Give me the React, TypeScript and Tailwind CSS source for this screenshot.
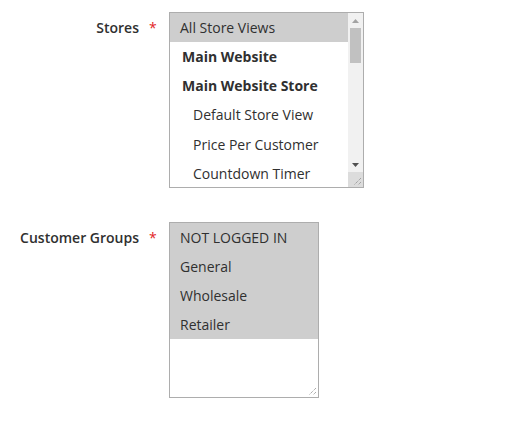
import React from "react";

type Opt = { label: string; bold?: boolean; indent?: number; selected?: boolean; tall?: boolean };

const storeOptions: Opt[] = [
  { label: "All Store Views", selected: true, indent: 10 },
  { label: "Main Website", bold: true, indent: 12 },
  { label: "Main Website Store", bold: true, indent: 12 },
  { label: "Default Store View", indent: 23, tall: true },
  { label: "Price Per Customer", indent: 23 },
  { label: "Countdown Timer", indent: 23 },
];

const groupOptions: Opt[] = [
  { label: "NOT LOGGED IN", selected: true, indent: 10 },
  { label: "General", selected: true, indent: 10 },
  { label: "Wholesale", selected: true, indent: 10 },
  { label: "Retailer", selected: true, indent: 10 },
];

function Resizer() {
  return (
    <svg width="15" height="15" viewBox="0 0 15 15" className="block">
      <path d="M13 6 L6 13" stroke="#8a8a8a" strokeWidth="1" strokeDasharray="1 1" />
      <path d="M13 10 L10 13" stroke="#8a8a8a" strokeWidth="1" strokeDasharray="1 1" />
    </svg>
  );
}

function OptionRow({ opt }: { opt: Opt }) {
  return (
    <div
      className={`shrink-0 whitespace-nowrap ${opt.tall ? "h-[30px] leading-[29px]" : "h-[29px] leading-[29px]"} ${
        opt.selected ? "bg-[#cecece]" : ""
      } ${opt.bold ? "font-bold" : ""}`}
      style={{ paddingLeft: opt.indent }}
    >
      {opt.label}
    </div>
  );
}

function FieldLabel({ text }: { text: string }) {
  return (
    <div className="flex w-[169px] shrink-0 items-start pt-[1px] leading-[29px]">
      <span className="w-[139px] text-right font-semibold">{text}</span>
      <span className="ml-[10px] text-[#e22626]">*</span>
    </div>
  );
}

export default function App() {
  return (
    <div
      className="h-[426px] w-[524px] bg-white pt-[12px] text-[14px] text-[#303030]"
      style={{ fontFamily: '"Open Sans", "Noto Sans", sans-serif' }}
    >
      <div className="flex">
        <FieldLabel text="Stores" />
        <div className="flex h-[176px] w-[195px] border border-[#adadad] bg-white">
          <div className="flex flex-1 flex-col overflow-hidden">
            {storeOptions.map(o => (
              <OptionRow key={o.label} opt={o} />
            ))}
          </div>
          {/* scrollbar */}
          <div className="flex w-[15px] flex-col bg-[#f1f1f1]">
            <div className="flex h-[15px] items-center justify-center">
              <svg width="7" height="4" viewBox="0 0 7 4">
                <path d="M3.5 0 L7 4 L0 4 Z" fill="#a3a3a3" />
              </svg>
            </div>
            <div className="mx-[2px] h-[35px] bg-[#c1c1c1]" />
            <div className="flex-1" />
            <div className="flex h-[15px] items-center justify-center">
              <svg width="7" height="4" viewBox="0 0 7 4">
                <path d="M0 0 L7 0 L3.5 4 Z" fill="#505050" />
              </svg>
            </div>
            <div className="h-[15px] bg-[#dcdcdc]">
              <Resizer />
            </div>
          </div>
        </div>
      </div>

      <div className="mt-[34px] flex">
        <FieldLabel text="Customer Groups" />
        <div className="relative flex h-[176px] w-[150px] flex-col border border-[#adadad] bg-white">
          {groupOptions.map(o => (
            <OptionRow key={o.label} opt={o} />
          ))}
          <div className="absolute bottom-0 right-0">
            <Resizer />
          </div>
        </div>
      </div>
    </div>
  );
}
